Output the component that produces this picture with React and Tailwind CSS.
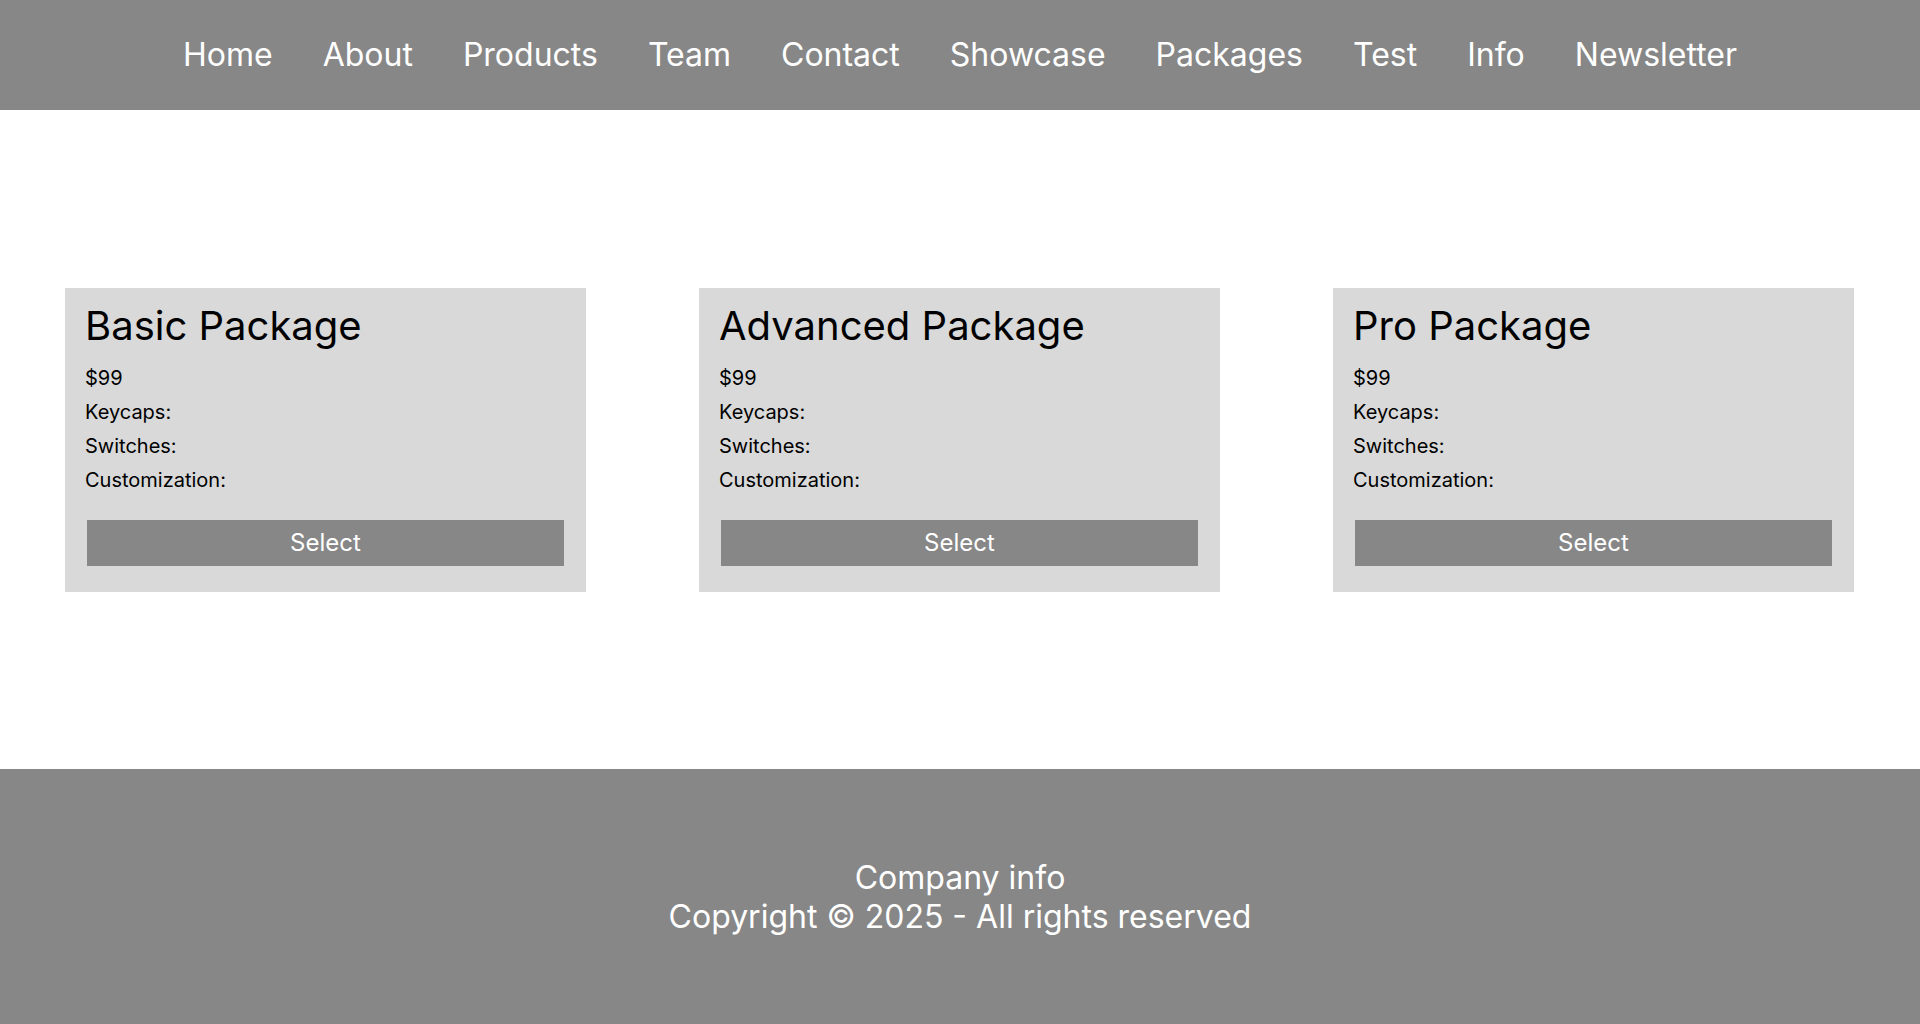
const navItems = ['Home', 'About', 'Products', 'Team', 'Contact', 'Showcase', 'Packages', 'Test', 'Info', 'Newsletter']

const packages = [
  { name: 'Basic Package', price: '$99' },
  { name: 'Advanced Package', price: '$99' },
  { name: 'Pro Package', price: '$99' },
]

function PackageCard({ pkg }) {
  return (
    <div className="flex w-[521px] flex-col bg-[#d9d9d9] px-5 pt-[14px] pb-[26px] text-black">
      <h2 className="text-[40px] leading-[48px] font-normal">{pkg.name}</h2>
      <div className="mt-[11px] text-[20px] leading-[34px]">
        <p>{pkg.price}</p>
        <p>Keycaps:</p>
        <p>Switches:</p>
        <p>Customization:</p>
      </div>
      <button className="mx-[2px] mt-[23px] h-[46px] bg-[#878787] text-[24px] text-white">Select</button>
    </div>
  )
}

export default function App() {
  return (
    <div className="flex min-h-screen flex-col bg-white font-['Inter',sans-serif]">
      <nav className="flex h-[110px] items-center justify-center gap-[50px] bg-[#878787] text-[32px] text-white">
        {navItems.map((item) => (
          <a key={item} href="#" className="leading-none">
            {item}
          </a>
        ))}
      </nav>

      <main className="flex flex-1 items-center gap-[113px] pl-[65px]">
        {packages.map((pkg) => (
          <PackageCard key={pkg.name} pkg={pkg} />
        ))}
      </main>

      <footer className="flex h-[255px] flex-col items-center justify-center bg-[#878787] text-[32px] leading-[39px] text-white">
        <p>Company info</p>
        <p>Copyright © 2025 - All rights reserved</p>
      </footer>
    </div>
  )
}
